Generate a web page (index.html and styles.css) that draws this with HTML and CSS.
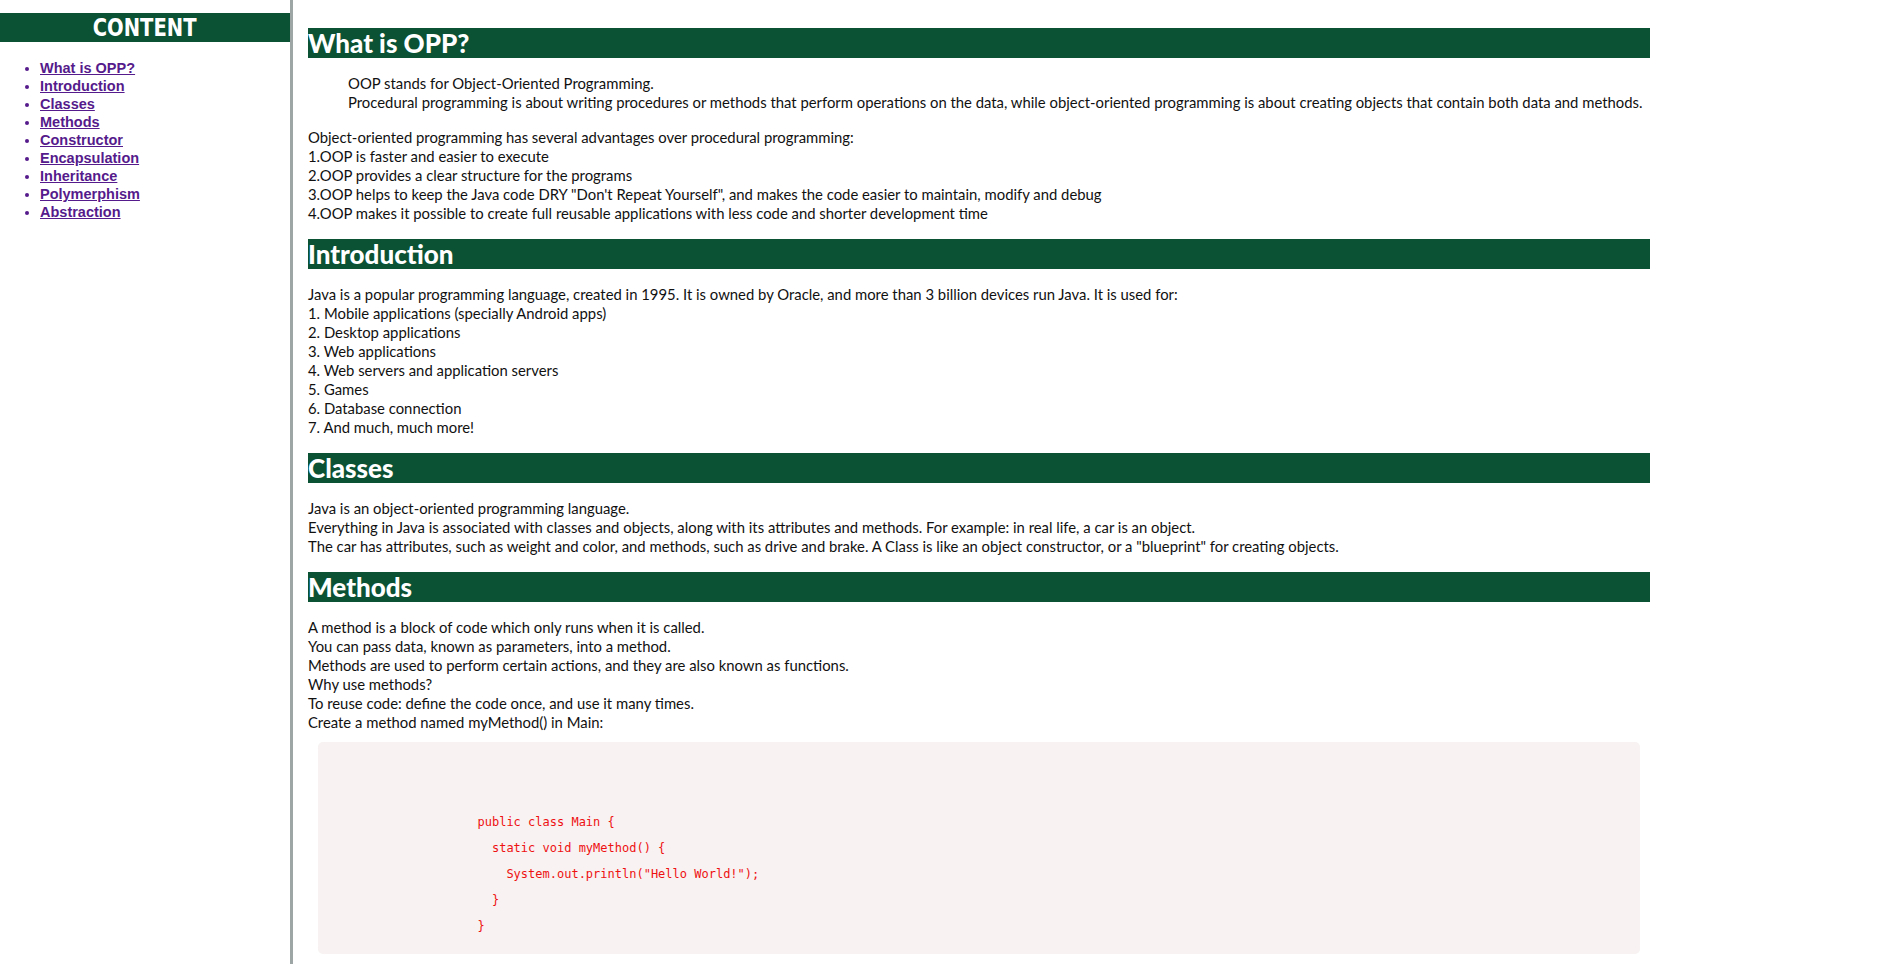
FILE: index.html
```html
<!DOCTYPE html>
<html lang="en">
<head>
<meta charset="utf-8">
<title>OOP</title>
<link rel="stylesheet" href="styles.css">
</head>
<body>
<div class="page">
  <nav class="sidebar">
    <h1 class="side-title"><span class="side-title-text">CONTENT</span></h1>
    <ul class="toc">
      <li><a href="#what">What is OPP?</a></li>
      <li><a href="#intro">Introduction</a></li>
      <li><a href="#classes">Classes</a></li>
      <li><a href="#methods">Methods</a></li>
      <li><a href="#constructor">Constructor</a></li>
      <li><a href="#encapsulation">Encapsulation</a></li>
      <li><a href="#inheritance">Inheritance</a></li>
      <li><a href="#polymerphism">Polymerphism</a></li>
      <li><a href="#abstraction">Abstraction</a></li>
    </ul>
  </nav>
  <main class="main">
    <h2 class="sec-title" id="what">What is OPP?</h2>
    <blockquote class="quote">OOP stands for Object-Oriented Programming.<br>Procedural programming is about writing procedures or methods that perform operations on the data, while object-oriented programming is about creating objects that contain both data and methods.</blockquote>
    <p class="text">Object-oriented programming has several advantages over procedural programming:<br>1.OOP is faster and easier to execute<br>2.OOP provides a clear structure for the programs<br>3.OOP helps to keep the Java code DRY "Don't Repeat Yourself", and makes the code easier to maintain, modify and debug<br>4.OOP makes it possible to create full reusable applications with less code and shorter development time</p>

    <h2 class="sec-title" id="intro">Introduction</h2>
    <p class="text">Java is a popular programming language, created in 1995. It is owned by Oracle, and more than 3 billion devices run Java. It is used for:<br>1. Mobile applications (specially Android apps)<br>2. Desktop applications<br>3. Web applications<br>4. Web servers and application servers<br>5. Games<br>6. Database connection<br>7. And much, much more!</p>

    <h2 class="sec-title" id="classes">Classes</h2>
    <p class="text">Java is an object-oriented programming language.<br>Everything in Java is associated with classes and objects, along with its attributes and methods. For example: in real life, a car is an object.<br>The car has attributes, such as weight and color, and methods, such as drive and brake. A Class is like an object constructor, or a "blueprint" for creating objects.</p>

    <h2 class="sec-title" id="methods">Methods</h2>
    <div class="text">A method is a block of code which only runs when it is called.<br>You can pass data, known as parameters, into a method.<br>Methods are used to perform certain actions, and they are also known as functions.<br>Why use methods?<br>To reuse code: define the code once, and use it many times.<br>Create a method named myMethod() in Main:</div>
    <pre class="code">


                    public class Main {
                      static void myMethod() {
                        System.out.println("Hello World!");
                      }
                    }</pre>
  </main>
</div>
</body>
</html>
```
FILE: styles.css
```css
html, body {
  margin: 0;
  padding: 0;
  background: #ffffff;
}

.page {
  display: flex;
  align-items: stretch;
  min-height: 100vh;
}

.sidebar {
  width: 290px;
  flex: 0 0 290px;
  border-right: 3px solid #9da6a5;
}

.side-title {
  margin: 13px 0 0;
  height: 29px;
  line-height: 30px;
  background: #0b5133;
  color: #ffffff;
  text-align: center;
  font-family: "DejaVu Sans Condensed", "Liberation Sans", sans-serif;
  font-weight: bold;
  font-size: 25px;
}

.side-title-text {
  display: inline-block;
  transform: scaleX(0.87);
}

.toc {
  margin: 17px 0 0;
  padding-left: 40px;
  font-family: "Liberation Sans", Arial, sans-serif;
  font-size: 14.5px;
  line-height: 18px;
  font-weight: bold;
  color: #551a8b;
}

.toc a {
  color: #551a8b;
  text-decoration: underline;
}

.main {
  width: 1342px;
  padding: 12px 15px 0;
  font-family: Lato, "Open Sans", sans-serif;
  font-size: 14.85px;
  line-height: 19px;
  color: #111111;
}

.sec-title {
  margin: 16px 0;
  height: 30px;
  line-height: 31px;
  background: #0b5133;
  color: #ffffff;
  font-family: Lato, "Open Sans", sans-serif;
  font-weight: 900;
  font-size: 26px;
}

.quote {
  margin: 16px 0 16px 40px;
  white-space: nowrap;
}

.text {
  margin: 16px 0;
}

div.text {
  margin-bottom: 0;
}

.code {
  margin: 10px;
  padding: 15px;
  background: #f8f2f2;
  border-radius: 5px;
  font-family: "DejaVu Sans Mono", "Liberation Mono", monospace;
  font-size: 12px;
  line-height: 26px;
  color: #ee1111;
}
```
